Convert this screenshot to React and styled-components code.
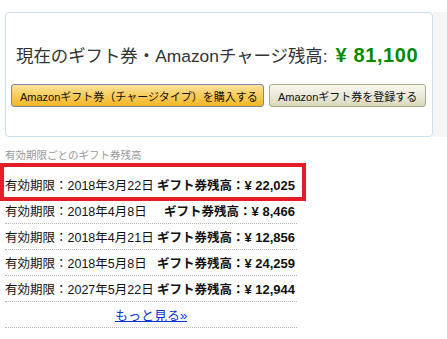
import React from "react";
import styled, { createGlobalStyle } from "styled-components";

const GlobalStyle = createGlobalStyle`
  html, body {
    margin: 0;
    padding: 0;
    background: #fff;
  }
  body {
    font-family: "Liberation Sans", "Noto Sans CJK JP", sans-serif;
    color: #111;
  }
`;

const rows = [
  { date: "2018年3月22日", amount: "22,025", highlight: true },
  { date: "2018年4月8日", amount: "8,466" },
  { date: "2018年4月21日", amount: "12,856" },
  { date: "2018年5月8日", amount: "24,259" },
  { date: "2027年5月22日", amount: "12,944" },
];

export default function App() {
  return (
    <>
      <GlobalStyle />
      <Page>
        <TopRow>
          <BalancePanel>
            <BalanceTitle>
              現在のギフト券・Amazonチャージ残高:
              <BalanceValue>¥ 81,100</BalanceValue>
            </BalanceTitle>
            <ButtonRow>
              <Button variant="primary">
                Amazonギフト券（チャージタイプ）を購入する
              </Button>
              <Button>Amazonギフト券を登録する</Button>
            </ButtonRow>
          </BalancePanel>
          <SidePanel />
        </TopRow>

        <ExpirySection>
          <SectionHeading>有効期限ごとのギフト券残高</SectionHeading>
          <List>
            {rows.map((row) => (
              <Row key={row.date} highlight={row.highlight}>
                <DateText>有効期限：{row.date}</DateText>
                <AmountText>
                  ギフト券残高：<Money>¥ {row.amount}</Money>
                </AmountText>
              </Row>
            ))}
            <MoreRow>
              <MoreLink href="#">もっと見る»</MoreLink>
            </MoreRow>
          </List>
        </ExpirySection>
      </Page>
    </>
  );
}

const Page = styled.div`
  width: 447px;
  height: 339px;
  padding-top: 12px;
  box-sizing: border-box;
  overflow: hidden;
`;

const TopRow = styled.div`
  display: flex;
  padding-left: 5px;
`;

const BalancePanel = styled.div`
  width: 428px;
  height: 125px;
  box-sizing: border-box;
  border: 1px solid #c9e0f2;
  border-radius: 4px;
  padding: 30px 5px 0;
`;

const SidePanel = styled.div`
  flex: 1;
  background: #f6f6f6;
`;

const BalanceTitle = styled.div`
  padding-left: 5px;
  font-size: 17.4px;
  line-height: 24px;
  color: #333;
  white-space: nowrap;
`;

const BalanceValue = styled.span`
  margin-left: 8px;
  font-family: "Liberation Sans", sans-serif;
  font-weight: bold;
  font-size: 20px;
  letter-spacing: 0.6px;
  color: #008a00;
`;

const ButtonRow = styled.div`
  display: flex;
  gap: 5px;
  margin-top: 16px;
`;

const Button = styled.button`
  height: 23px;
  padding: 0 8px;
  border-radius: 3px;
  font-family: "Liberation Sans", "Noto Sans CJK JP", sans-serif;
  font-size: 11px;
  color: #111;
  white-space: nowrap;
  cursor: pointer;
  border: 1px solid
    ${({ variant }) => (variant === "primary" ? "#7f86a3" : "#aaa98c")};
  background: ${({ variant }) =>
    variant === "primary"
      ? "linear-gradient(to bottom, #fbe29e 0%, #f8cf63 45%, #f5b624 100%)"
      : "linear-gradient(to bottom, #f8f7ea 0%, #eceadb 50%, #d9d7b8 100%)"};
  width: ${({ variant }) => (variant === "primary" ? "253px" : "157px")};
`;

const ExpirySection = styled.div`
  margin-top: 11px;
  padding-left: 5px;
  width: 292px;
`;

const SectionHeading = styled.div`
  font-size: 10.5px;
  line-height: 14px;
  color: #999;
  margin-bottom: 10px;
`;

const List = styled.div`
  display: flex;
  flex-direction: column;
`;

const Row = styled.div`
  position: relative;
  display: flex;
  justify-content: space-between;
  align-items: center;
  height: 26px;
  box-sizing: border-box;
  padding-right: 2px;
  border-bottom: 1px dotted #b5b5b5;
  font-size: 12.5px;
  white-space: nowrap;

  ${({ highlight }) =>
    highlight &&
    `
    &::after {
      content: "";
      position: absolute;
      left: -5px;
      top: -9px;
      right: -9px;
      bottom: -4px;
      border: 4px solid #e41e26;
    }
  `}
`;

const DateText = styled.span``;

const AmountText = styled.span`
  font-weight: bold;
`;

const Money = styled.span`
  font-family: "Liberation Sans", sans-serif;
  font-weight: bold;
  font-size: 13px;
`;

const MoreRow = styled.div`
  height: 26px;
  box-sizing: border-box;
  display: flex;
  justify-content: center;
  align-items: center;
  border-bottom: 1px dotted #b5b5b5;
`;

const MoreLink = styled.a`
  font-size: 13px;
  color: #0033dd;
  text-decoration: underline;
`;
